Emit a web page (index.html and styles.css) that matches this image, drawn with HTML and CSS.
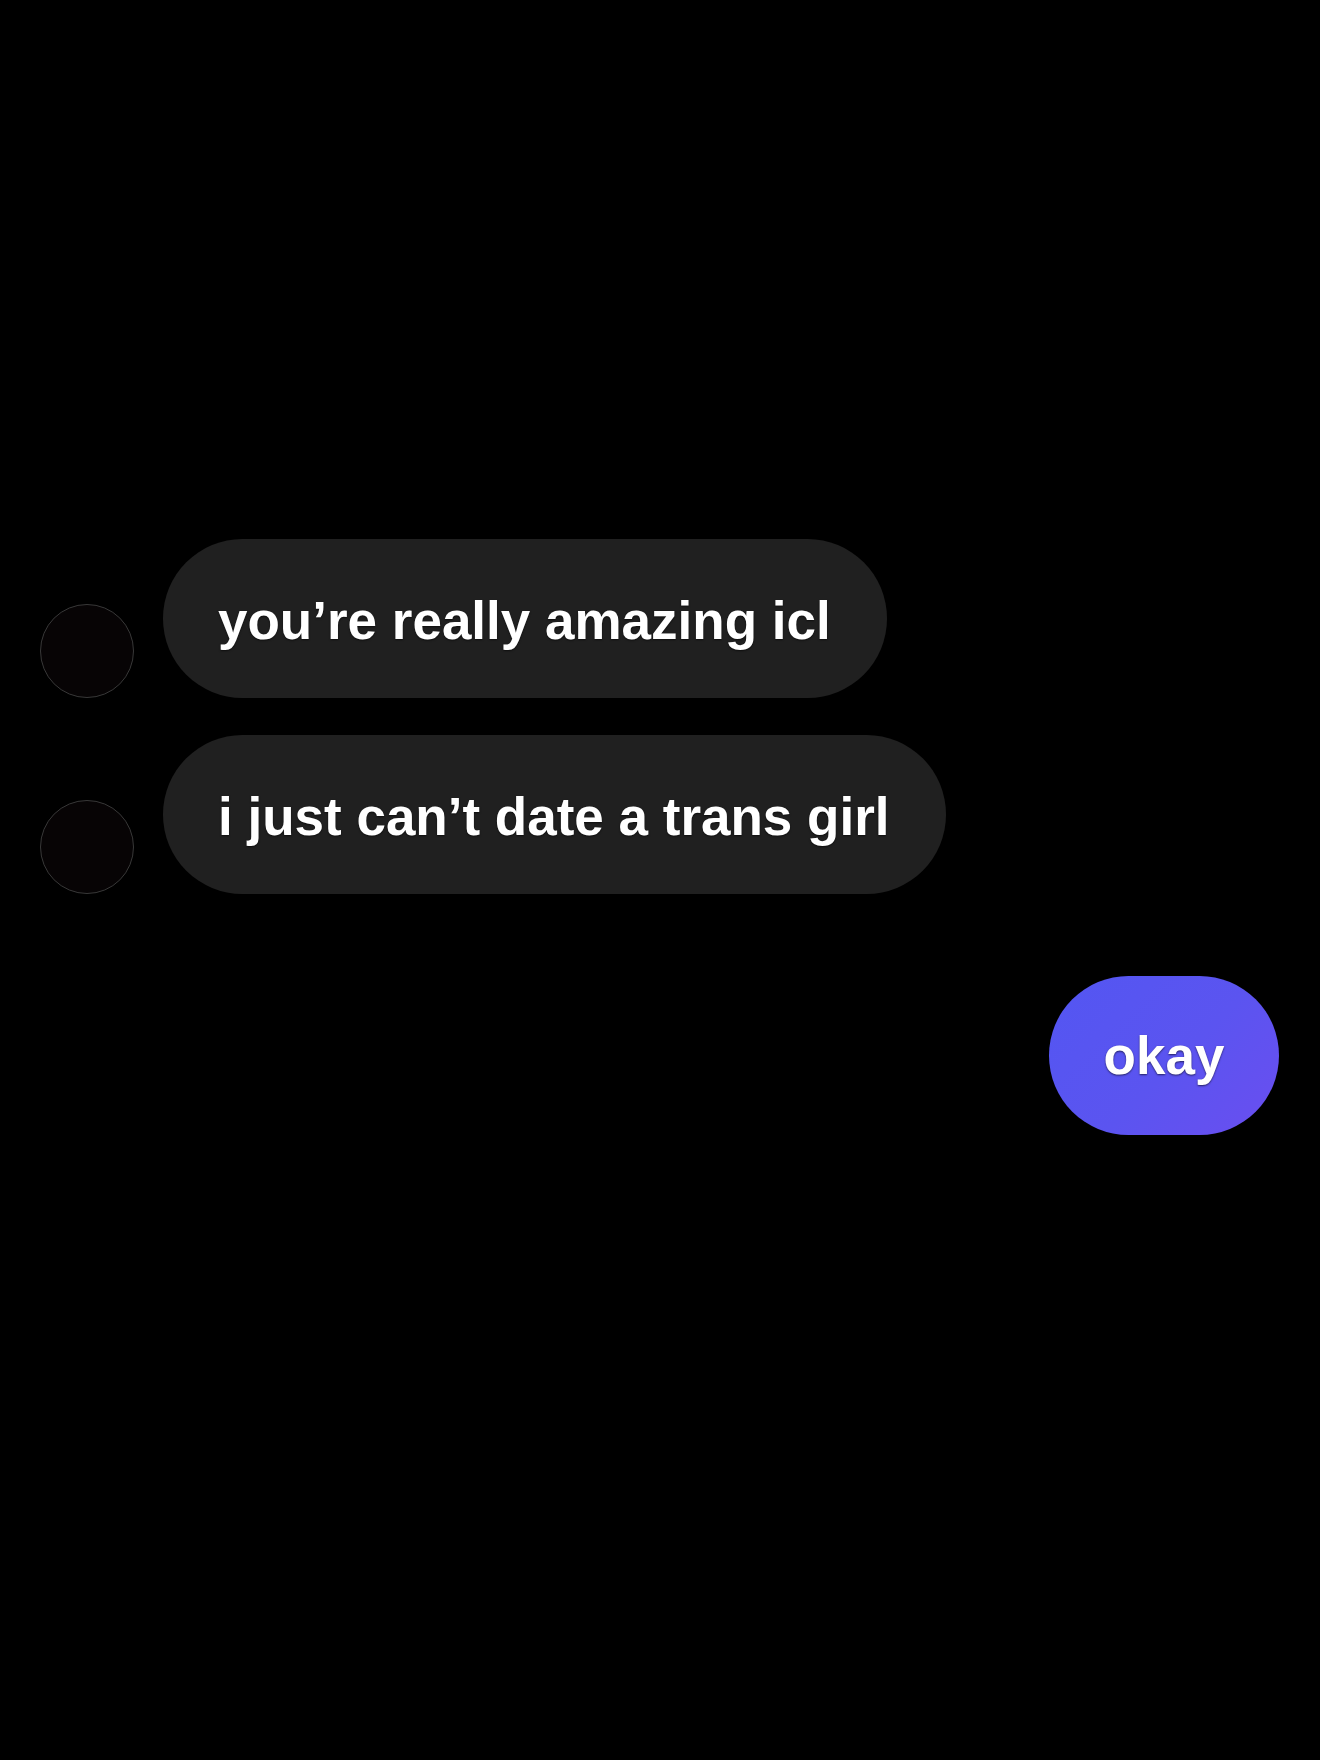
FILE: index.html
```html
<!DOCTYPE html>
<html>
	<head>
		<meta charset="UTF-8">
		<title>chat</title>
		<link rel="stylesheet" href="styles.css">
	</head>
	<body>
		<div class="chat">
			<div class="row">
				<div class="avatar"></div>
				<div class="bubble">you’re really amazing icl</div>
			</div>
			<div class="row">
				<div class="avatar"></div>
				<div class="bubble">i just can’t date a trans girl</div>
			</div>
			<div class="row mine">
				<div class="bubble me">okay</div>
			</div>
		</div>
	</body>
</html>
```

FILE: styles.css
```css
* {
	box-sizing: border-box;
}

body {
	margin: 0;
	background-color: #000;
	font-family: "Liberation Sans", Arial, sans-serif;
}

.chat {
	width: 1320px;
	height: 1760px;
	padding: 539px 41px 0 40px;
	display: flex;
	flex-direction: column;
	gap: 37px;
}

.row {
	display: flex;
	align-items: flex-end;
	gap: 29px;
}

.mine {
	justify-content: flex-end;
	margin-top: 45px;
}

.avatar {
	width: 94px;
	height: 94px;
	border-radius: 50%;
	border: 1.5px solid #383838;
	background-color: #070405;
}

.bubble {
	height: 159px;
	padding: 4px 56px 0 55px;
	border-radius: 80px;
	background-color: #202020;
	color: #fff;
	font-size: 53px;
	font-weight: bold;
	display: flex;
	align-items: center;
	text-shadow: 0 1px 2px rgba(0, 0, 0, 0.6);
}

.me {
	width: 230px;
	justify-content: center;
	padding: 0;
	background: linear-gradient(135deg, #5356f2, #5b54f0 55%, #6a4ef0);
}
```
